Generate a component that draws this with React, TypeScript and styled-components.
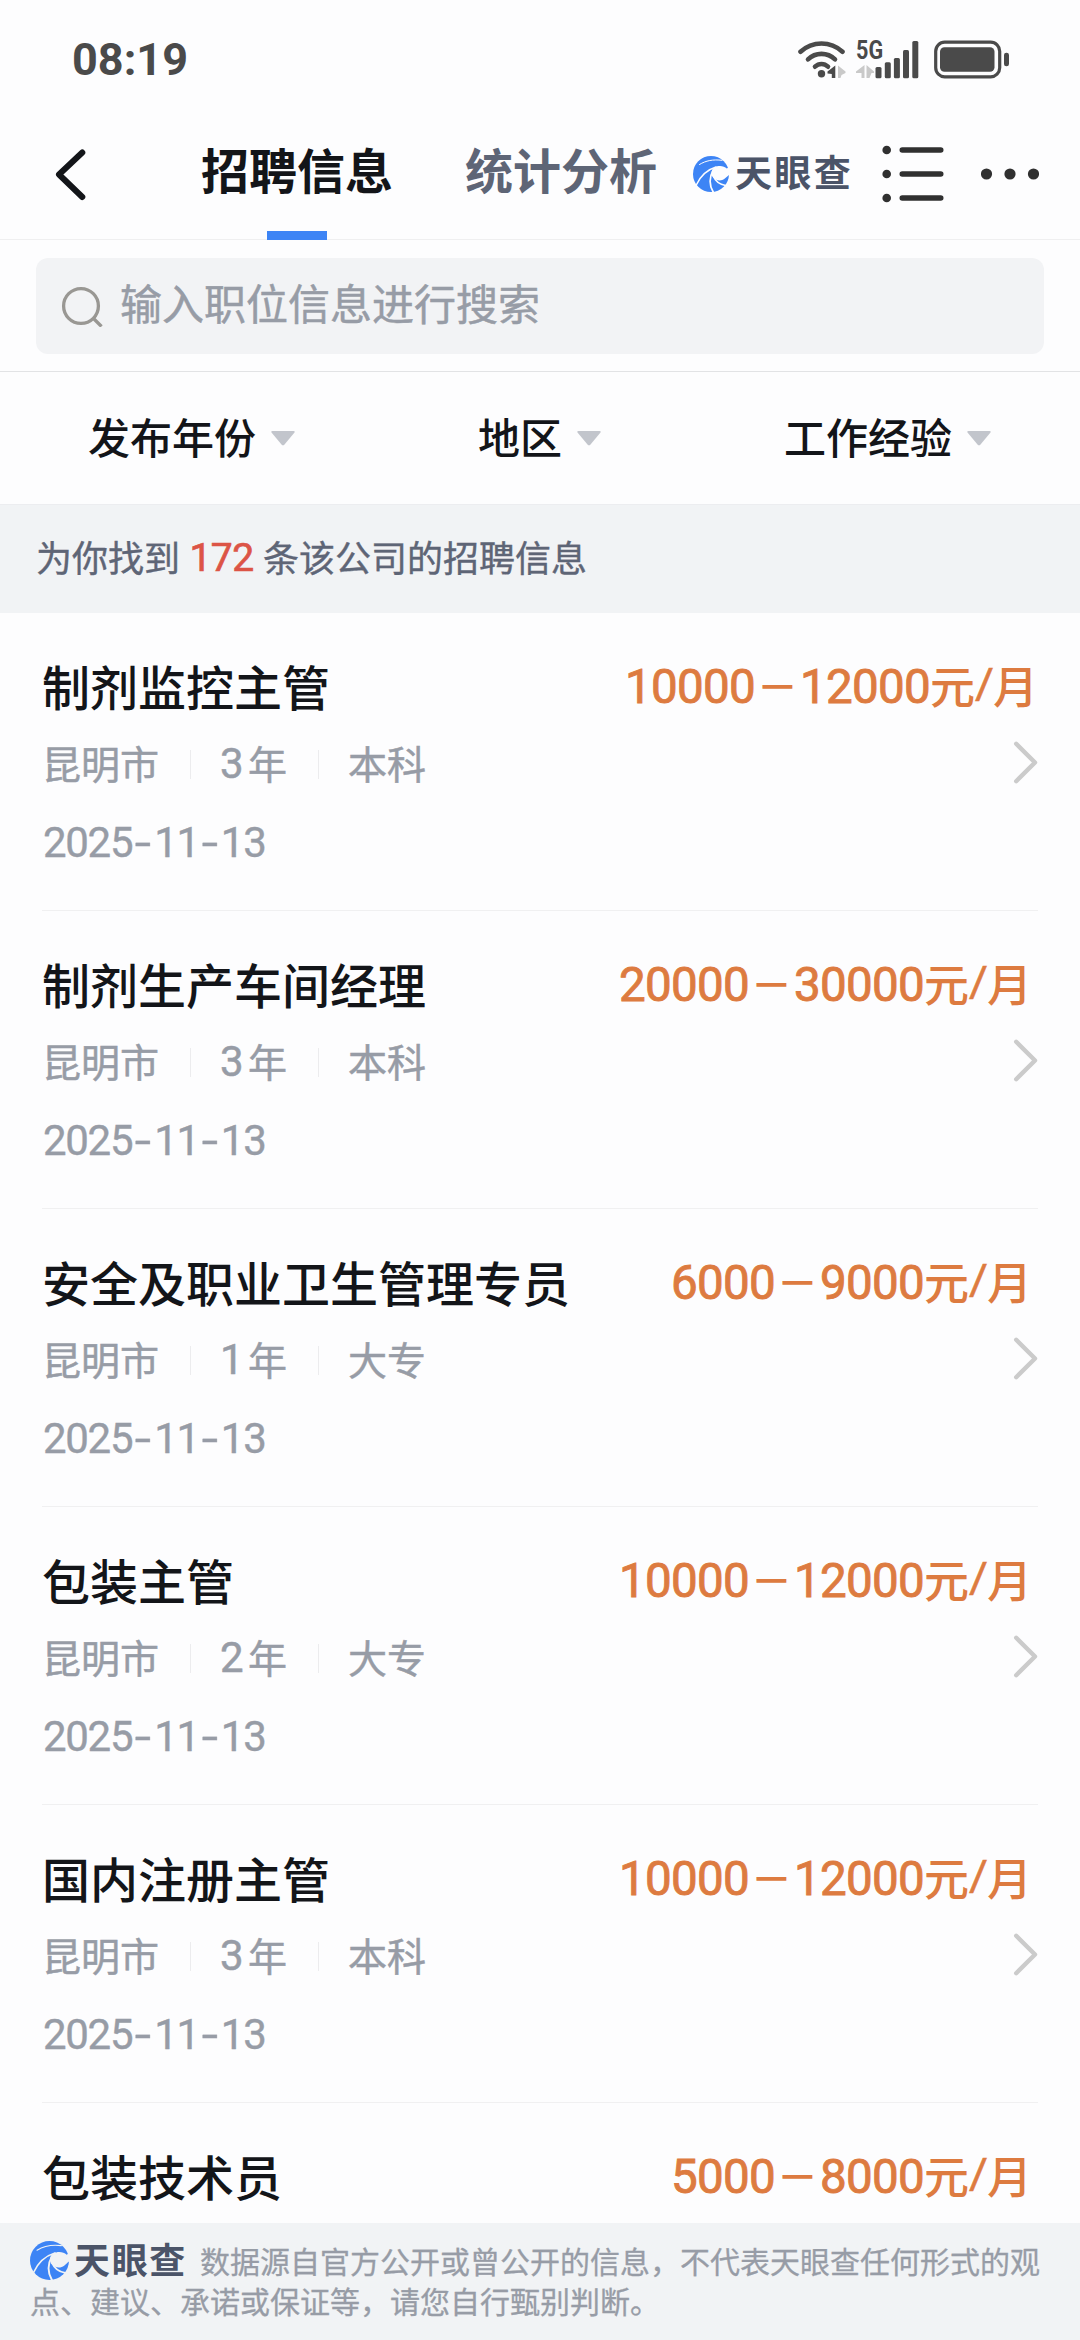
import React from "react";
import styled, { createGlobalStyle } from "styled-components";

const GlobalStyle = createGlobalStyle`
  * { box-sizing: border-box; }
  html, body { margin: 0; padding: 0; background: #fdfdfe; }
  body {
    font-family: "Noto Sans CJK SC", "Noto Sans", sans-serif;
    color: #131519;
  }
  svg { display: block; flex: none; }
`;

const Screen = styled.div`
  width: 1080px;
  height: 2340px;
  display: flex;
  flex-direction: column;
  overflow: hidden;
  background: #fdfdfe;
`;

/* Status bar */
const StatusBar = styled.header`
  height: 110px;
  flex: none;
  display: flex;
  justify-content: space-between;
  padding: 34px 70px 0 72px;
`;

const Clock = styled.time`
  font: 700 45px/52px Roboto, "Noto Sans", sans-serif;
  color: #4a4a4a;
`;

const StatusIcons = styled.div`
  display: flex;
  align-items: flex-start;
  padding-top: 6px;
`;

const Cellular = styled.div`
  position: relative;
  width: 64px;
  height: 40px;
  margin: 0 14px 0 10px;
`;

const NetworkLabel = styled.span`
  position: absolute;
  left: 0;
  top: -1px;
  font: 700 26px/22px Roboto, "Noto Sans", sans-serif;
  color: #4a4a4a;
  transform: scaleX(0.83);
  transform-origin: left center;
`;

/* Navigation */
const NavBar = styled.nav`
  height: 130px;
  flex: none;
  display: flex;
  border-bottom: 1px solid #efeff0;
  padding-left: 54px;
`;

const BackButton = styled.button`
  border: 0;
  background: none;
  padding: 38px 0 0;
  width: 147px;
  display: flex;
  align-items: flex-start;
`;

const Tab = styled.div<{ $active?: boolean }>`
  height: 130px;
  display: flex;
  flex-direction: column;
  align-items: center;
  justify-content: space-between;
  padding-top: 22px;
  margin-right: ${(p) => (p.$active ? 72 : 36)}px;
  font-size: 48px;
  line-height: 72px;
  font-weight: 700;
  white-space: nowrap;
  color: ${(p) => (p.$active ? "#131519" : "#5e6576")};
  &::after {
    content: "";
    width: 60px;
    height: 9px;
    background: ${(p) => (p.$active ? "#3d84f5" : "transparent")};
  }
`;

const NavActions = styled.div`
  height: 128px;
  display: flex;
  align-items: center;
`;

const MenuGap = styled.i`
  width: 29px;
`;

const MoreGap = styled.i`
  width: 37px;
`;

const Brand = styled.span<{ $size: number }>`
  display: inline-flex;
  align-items: center;
  flex: none;
  height: ${(p) => p.$size}px;
  gap: ${(p) => (p.$size > 37 ? 5 : 6)}px;
`;

const BrandName = styled.span<{ $size: number; $width: number }>`
  width: ${(p) => p.$width}px;
  font-size: ${(p) => p.$size}px;
  line-height: ${(p) => p.$size}px;
  padding-bottom: 5px;
  font-weight: 700;
  color: #4b5468;
  white-space: nowrap;
  letter-spacing: ${(p) => (p.$width - p.$size * 3) / 3}px;
`;

/* Search */
const SearchArea = styled.div`
  flex: none;
  height: 132px;
  padding: 18px 36px;
  border-bottom: 1px solid #e2e3e5;
`;

const SearchBox = styled.div`
  height: 96px;
  border-radius: 12px;
  background: #f2f3f5;
  display: flex;
  align-items: center;
  padding-left: 24px;
  gap: 17px;
`;

const Placeholder = styled.span`
  font-size: 42px;
  line-height: 60px;
  margin-top: -9px;
  color: #979ca6;
  -webkit-text-stroke: 0.5px #979ca6;
`;

/* Filters */
const Filters = styled.div`
  flex: none;
  height: 132px;
  display: flex;
  justify-content: space-between;
  align-items: center;
  padding: 0 89px 0 88px;
`;

const Filter = styled.div`
  display: flex;
  align-items: center;
  gap: 15px;
  font-size: 42px;
  line-height: 60px;
  font-weight: 500;
  span { margin-top: -5px; }
`;

const Summary = styled.p`
  flex: none;
  margin: 0;
  height: 109px;
  background: #f1f3f5;
  border-top: 1px solid #ecedf0;
  padding: 24px 36px 0;
  display: flex;
  font-size: 36px;
  line-height: 54px;
  color: #5e6576;
  -webkit-text-stroke: 0.4px #5e6576;
`;

const Count = styled.b`
  width: 83px;
  text-align: center;
  font: 400 39px/59px Roboto, "Noto Sans", sans-serif;
  letter-spacing: -0.6px;
  color: #dc5446;
  -webkit-text-stroke: 0.7px #dc5446;
`;

/* Job list */
const JobList = styled.main`
  flex: 1;
  min-height: 0;
  overflow: hidden;
  padding: 0 42px;
`;

const JobRow = styled.article<{ $peek: boolean }>`
  height: ${(p) => (p.$peek ? 120 : 298)}px;
  border-bottom: ${(p) => (p.$peek ? "0" : "1px solid #f0f0f1")};
  padding-top: 39px;
`;

const JobTop = styled.div<{ $inset: number }>`
  height: 72px;
  display: flex;
  justify-content: space-between;
  padding-right: ${(p) => p.$inset}px;
`;

const JobTitle = styled.h2`
  margin: 0;
  font-size: 48px;
  line-height: 67px;
  font-weight: 500;
`;

const Salary = styled.div`
  display: flex;
  font-size: 45px;
  line-height: 66px;
  font-weight: 500;
  color: #dd7b40;
`;

const Amount = styled.span`
  font: 400 47.5px/71px Roboto, "Noto Sans", sans-serif;
  letter-spacing: -0.7px;
  -webkit-text-stroke: 0.9px #dd7b40;
`;

const WideDash = styled.span`
  width: 45px;
  text-align: center;
  transform: scaleX(0.92);
`;

const Slash = styled.span`
  font: 400 46px/63px Roboto, "Noto Sans", sans-serif;
  width: 18px;
  transform: scaleY(0.93);
  -webkit-text-stroke: 0.6px #dd7b40;
`;

const JobMiddle = styled.div`
  height: 76px;
  display: flex;
  justify-content: space-between;
  align-items: center;
`;

const Tags = styled.div`
  display: flex;
  align-items: center;
  font-size: 39px;
  line-height: 58px;
  color: #979ca6;
  -webkit-text-stroke: 0.5px #979ca6;
`;

const Tag = styled.span`
  display: flex;
  height: 58px;
  & + & {
    margin-left: 31px;
    padding-left: 30px;
    background: linear-gradient(#ececee, #ececee) 0 17px / 1px 29px no-repeat;
  }
`;

const Years = styled.span`
  width: 28px;
  font: 400 42px/62px Roboto, "Noto Sans", sans-serif;
`;

const PostDate = styled.div`
  display: flex;
  height: 85px;
  align-items: center;
  padding-left: 1px;
  font: 400 42px/60px Roboto, "Noto Sans", sans-serif;
  letter-spacing: -1.3px;
  color: #979ca6;
  -webkit-text-stroke: 0.4px #979ca6;
`;

const Hyphen = styled.span`
  width: 22px;
  text-align: center;
  letter-spacing: 0;
  transform: scaleX(1.4);
`;

/* Footer */
const Disclaimer = styled.footer`
  flex: none;
  height: 117px;
  background: #f1f3f5;
  padding: 17px 30px 0;
  font-size: 30px;
  line-height: 40px;
  color: #979ca6;
`;

const DisclaimerLine = styled.div`
  display: flex;
  align-items: center;
  height: 40px;
  white-space: nowrap;
`;

const DisclaimerText = styled.span`
  -webkit-text-stroke: 0.3px #979ca6;
`;

const FooterBrand = styled.span`
  width: 170px;
  flex: none;
  display: flex;
`;

const Swirl = ({ size, bg }: { size: number; bg: string }) => (
  <svg width={size} height={size} viewBox="0 0 36 36">
    <circle cx="18" cy="18" r="18" fill="#3d84f5" />
    <path d="M38 10L33.800 12.600C31 9.800 25.500 9.200 21.500 11.500C17.800 13.800 17.500 19 20.500 22C23.500 25 28.500 25.300 31.500 22.800C33.500 21.200 35 19.500 38 17.500Z" fill={bg} />
    <g fill="none" stroke={bg} strokeLinecap="round">
      <path d="M6.500 8.500C13 4.500 20 3.200 29 4.300" strokeWidth="1" />
      <path d="M3 29.500C7 20.500 13 14 23 11" strokeWidth="1.500" />
      <path d="M20.500 36.500C16.300 29.500 16.300 21 20.300 14" strokeWidth="1.700" />
      <path d="M32.500 29.500C27 28.500 22.300 25 20.300 20" strokeWidth="1.600" />
    </g>
  </svg>
);

const WifiIcon = () => (
  <svg width="48" height="40" viewBox="0 0 48 40" fill="none" stroke="#4a4a4a" strokeWidth="4.600" strokeLinecap="round">
    <path d="M2.500 11.800C14.500 .8 32.500 .8 44.500 11.800" />
    <path d="M10 19.300C17.500 12 29.500 12 37 19.300" />
    <path d="M17 26.700C20.800 23 26.200 23 30 26.700" />
    <circle cx="23.500" cy="33.700" r="3.700" fill="#4a4a4a" stroke="none" />
    <path d="M37.300 25.500v12.500h-3.500v-4l-4.300-.5v-2z" fill="#4a4a4a" stroke="none" />
    <path d="M40 25.500l7.500 6v1.500l-4 2-1 3h-2.500z" fill="#c9c9c9" stroke="none" />
  </svg>
);

const BARS = [
  [19.500, 27],
  [28.800, 22.300],
  [37.900, 18],
  [47, 10],
  [56.300, 1],
];

const SignalIcon = () => (
  <svg width="64" height="40" viewBox="0 0 64 40">
    <path d="M8.500 25v13h-3v-5H0v-1.500z M10.500 25l7.500 6.500v1.500h-2.500l-2 5h-3z" fill="#c9c9c9" />
    {BARS.map(([x, y]) => (
      <rect key={x} x={x} y={y} width="6" height={38.300 - y} rx="1.500" fill="#4a4a4a" />
    ))}
  </svg>
);

const BatteryIcon = () => (
  <svg width="76" height="40" viewBox="0 0 76 40">
    <rect x="1.700" y="2.200" width="64" height="34.600" rx="9" fill="none" stroke="#4a4a4a" strokeWidth="3.200" />
    <rect x="6" y="7.300" width="54.500" height="24.500" rx="4.500" fill="#4a4a4a" />
    <rect x="70" y="12.700" width="5" height="13.600" rx="2.400" fill="#4a4a4a" />
  </svg>
);

const BackIcon = () => (
  <svg width="34" height="54" viewBox="0 0 34 54" fill="none" stroke="#131519" strokeWidth="6" strokeLinecap="round" strokeLinejoin="round">
    <path d="M28.300 4.500L5 26.500L28.300 49" />
  </svg>
);

const MenuIcon = () => (
  <svg width="62" height="58" viewBox="0 0 62 58" fill="#303030">
    {[5, 29, 53].map((y) => (
      <g key={y}>
        <circle cx="4.700" cy={y} r="4.300" />
        <rect x="17.500" y={y - 2.800} width="44" height="5.600" rx="2.800" />
      </g>
    ))}
  </svg>
);

const MoreIcon = () => (
  <svg width="58" height="12" viewBox="0 0 58 12" fill="#303030">
    {[5.500, 29, 52.500].map((x) => (
      <circle key={x} cx={x} cy="6" r="5.600" />
    ))}
  </svg>
);

const SearchIcon = () => (
  <svg width="43" height="42" viewBox="0 0 43 42" fill="none" stroke="#999793" strokeWidth="3.300">
    <circle cx="21" cy="21" r="17.400" />
    <path d="M33 33L41.500 41.500" />
  </svg>
);

const CaretIcon = () => (
  <svg width="24" height="15" viewBox="0 0 24 15">
    <path d="M1.500 0H22.500Q24.500 0 23.300 1.800L13.500 13.500Q12 15.200 10.500 13.500L.7 1.800Q-.5 0 1.500 0Z" fill="#c2c5cc" />
  </svg>
);

const ChevronIcon = () => (
  <svg width="25" height="43" viewBox="0 0 25 43" fill="none" stroke="#cbcbcb" strokeWidth="4.400" strokeLinecap="round" strokeLinejoin="round">
    <path d="M3.200 2.800L22 21.500L3.200 40.200" />
  </svg>
);

interface Job {
  title: string;
  low: string;
  high: string;
  years?: string;
  degree?: string;
}

const JOBS: Job[] = [
  { title: "制剂监控主管", low: "10000", high: "12000", years: "3", degree: "本科" },
  { title: "制剂生产车间经理", low: "20000", high: "30000", years: "3", degree: "本科" },
  { title: "安全及职业卫生管理专员", low: "6000", high: "9000", years: "1", degree: "大专" },
  { title: "包装主管", low: "10000", high: "12000", years: "2", degree: "大专" },
  { title: "国内注册主管", low: "10000", high: "12000", years: "3", degree: "本科" },
  { title: "包装技术员", low: "5000", high: "8000" },
];

const JobItem = ({ job, inset }: { job: Job; inset: number }) => (
  <JobRow $peek={!job.years}>
    <JobTop $inset={inset}>
      <JobTitle>{job.title}</JobTitle>
      <Salary>
        <Amount>{job.low}</Amount>
        <WideDash>－</WideDash>
        <Amount>{job.high}</Amount>
        <span>元</span>
        <Slash>/</Slash>
        <span>月</span>
      </Salary>
    </JobTop>
    {job.years && (
      <>
        <JobMiddle>
          <Tags>
            <Tag>昆明市</Tag>
            <Tag>
              <Years>{job.years}</Years>年
            </Tag>
            <Tag>{job.degree}</Tag>
          </Tags>
          <ChevronIcon />
        </JobMiddle>
        <PostDate>
          2025<Hyphen>-</Hyphen>11<Hyphen>-</Hyphen>13
        </PostDate>
      </>
    )}
  </JobRow>
);

export default function App() {
  return (
    <>
      <GlobalStyle />
      <Screen>
        <StatusBar>
          <Clock>08:19</Clock>
          <StatusIcons>
            <WifiIcon />
            <Cellular>
              <SignalIcon />
              <NetworkLabel>5G</NetworkLabel>
            </Cellular>
            <BatteryIcon />
          </StatusIcons>
        </StatusBar>
        <NavBar>
          <BackButton aria-label="返回">
            <BackIcon />
          </BackButton>
          <Tab $active>招聘信息</Tab>
          <Tab>统计分析</Tab>
          <NavActions>
            <Brand $size={36}>
              <Swirl size={36} bg="#fdfdfe" />
              <BrandName $size={37} $width={118}>天眼查</BrandName>
            </Brand>
            <MenuGap />
            <MenuIcon />
            <MoreGap />
            <MoreIcon />
          </NavActions>
        </NavBar>
        <SearchArea>
          <SearchBox>
            <SearchIcon />
            <Placeholder>输入职位信息进行搜索</Placeholder>
          </SearchBox>
        </SearchArea>
        <Filters>
          {["发布年份", "地区", "工作经验"].map((name) => (
            <Filter key={name}>
              <span>{name}</span>
              <CaretIcon />
            </Filter>
          ))}
        </Filters>
        <Summary>
          为你找到<Count>172</Count>条该公司的招聘信息
        </Summary>
        <JobList>
          {JOBS.map((job, i) => (
            <JobItem key={job.title} job={job} inset={i === 0 ? 0 : 6} />
          ))}
        </JobList>
        <Disclaimer>
          <DisclaimerLine>
            <FooterBrand>
              <Brand $size={39}>
                <Swirl size={39} bg="#f1f3f5" />
                <BrandName $size={36} $width={113}>天眼查</BrandName>
              </Brand>
            </FooterBrand>
            <DisclaimerText>数据源自官方公开或曾公开的信息，不代表天眼查任何形式的观</DisclaimerText>
          </DisclaimerLine>
          <DisclaimerLine>
            <DisclaimerText>点、建议、承诺或保证等，请您自行甄别判断。</DisclaimerText>
          </DisclaimerLine>
        </Disclaimer>
      </Screen>
    </>
  );
}
